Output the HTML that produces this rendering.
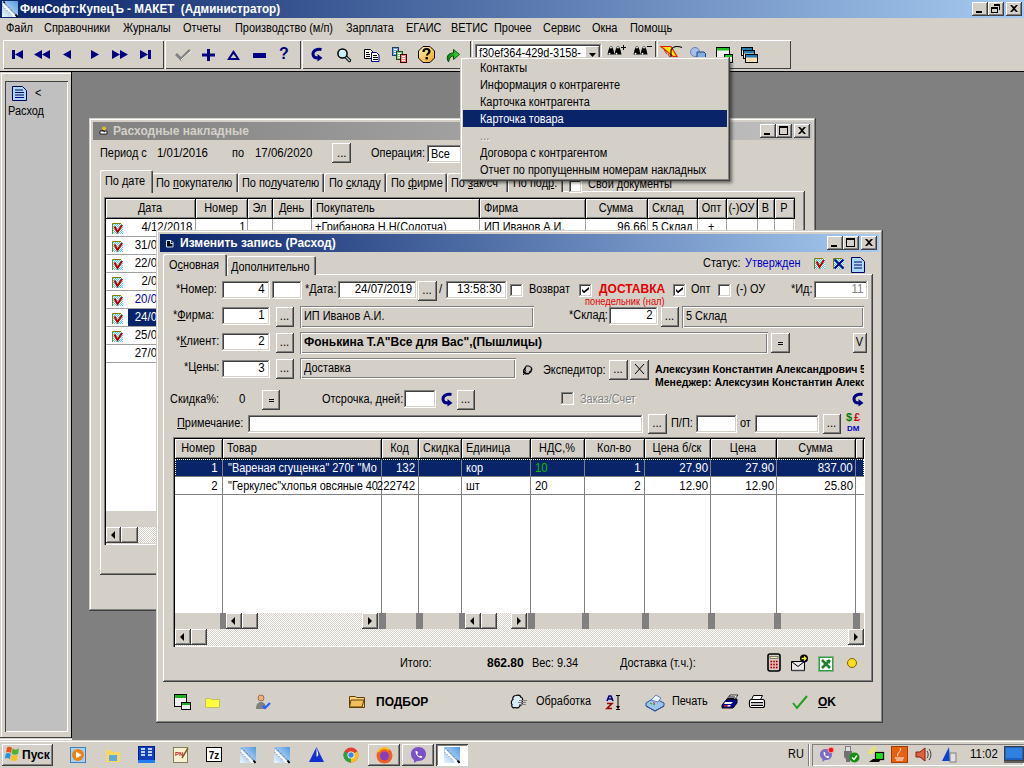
<!DOCTYPE html><html><head><meta charset="utf-8"><style>
*{margin:0;padding:0;box-sizing:border-box}
html,body{width:1024px;height:768px;overflow:hidden;background:#808080;font-family:"Liberation Sans",sans-serif;font-size:11px;color:#000}
.a{position:absolute}
.t{position:absolute;line-height:13px;white-space:nowrap;font-size:12px;transform:scaleX(.91);transform-origin:0 0}
.t.r{transform-origin:100% 0}
.t.c{transform-origin:50% 0}
.b{font-weight:bold}
.t.b{transform:none}
.t.n{transform:scaleX(.955)}
.face{background:#D4D0C8}
.raised{background:#D4D0C8;box-shadow:inset -1px -1px #404040,inset 1px 1px #fff,inset -2px -2px #808080,inset 2px 2px #D4D0C8}
.btn{background:#D4D0C8;box-shadow:inset -1px -1px #404040,inset 1px 1px #fff,inset -2px -2px #808080}
.sunken{background:#fff;box-shadow:inset -1px -1px #fff,inset 1px 1px #808080,inset -2px -2px #D4D0C8,inset 2px 2px #404040}
.etched{background:#D4D0C8;box-shadow:inset 1px 1px #808080,inset 2px 2px #fff,inset -1px -1px #fff,inset -2px -2px #808080}
.win{background:#D4D0C8;box-shadow:inset -1px -1px #404040,inset 1px 1px #D4D0C8,inset -2px -2px #808080,inset 2px 2px #fff}
.pane{background:#D4D0C8;box-shadow:inset -1px -1px #404040,inset 1px 1px #fff,inset -2px -2px #808080}
.cap{background:#D4D0C8;box-shadow:inset -1px -1px #404040,inset 1px 1px #fff,inset -2px -2px #808080}
.hdr{background:#D4D0C8;box-shadow:inset -1px -1px #000,inset 1px 1px #fff,inset -2px -2px #808080}
.u{text-decoration:underline}
.sel{background:#0A246A;color:#fff}
.dots{background-color:#fff;background-image:linear-gradient(45deg,#D4D0C8 25%,transparent 25%,transparent 75%,#D4D0C8 75%),linear-gradient(45deg,#D4D0C8 25%,transparent 25%,transparent 75%,#D4D0C8 75%);background-size:2px 2px;background-position:0 0,1px 1px}
svg{position:absolute;overflow:visible}
</style></head><body><svg width="0" height="0" style="position:absolute"><defs><pattern id="ck" width="2" height="2" patternUnits="userSpaceOnUse"><rect width="2" height="2" fill="#fff"/><rect width="1" height="1" fill="#40d8e8"/><rect x="1" y="1" width="1" height="1" fill="#40d8e8"/></pattern></defs></svg>
<div class="a" style="left:0;top:0;width:1024px;height:18px;background:linear-gradient(90deg,#0A246A,#A6CAF0)"></div>
<svg style="left:2px;top:1px" width="16" height="16" viewBox="0 0 16 16"><defs><linearGradient id="g1" x1="1" y1="0" x2="0" y2="1"><stop offset="0" stop-color="#5098e0"/><stop offset="1" stop-color="#f0f8ff"/></linearGradient></defs><rect x="0" y="0" width="16" height="16" fill="url(#g1)"/><path d="M1 2L15 16L11 16L1 6z" fill="#fff"/><path d="M2 1.5l13.5 13.5" stroke="#204060" stroke-width="0.9" stroke-dasharray="1 1.2"/><path d="M1 5.5l9 9" stroke="#204060" stroke-width="0.9" stroke-dasharray="1 1.5"/><path d="M13.5 13.5l2 2.5" stroke="#000" stroke-width="2"/><path d="M1.5 0.5l1.5 1.5" stroke="#000" stroke-width="1.5"/></svg>
<div class="t b" style="left:20px;top:3px;color:#fff;transform:scaleX(.972)">ФинСофт:КупецЪ - МАКЕТ&nbsp;&nbsp;(Администратор)</div>
<div class="a cap" style="left:972px;top:2px;width:16px;height:14px;"></div>
<svg style="left:976px;top:11px" width="6" height="2" viewBox="0 0 6 2"><rect width="6" height="2" fill="#000"/></svg>
<div class="a cap" style="left:988px;top:2px;width:16px;height:14px;"></div>
<svg style="left:991px;top:4px" width="9" height="9" viewBox="0 0 9 9"><path d="M2 0h7v6H8V2H3V0z M0 3h7v6H0z M1 5v3h5V5z" fill="#000" fill-rule="evenodd"/></svg>
<div class="a cap" style="left:1006px;top:2px;width:16px;height:14px;"></div>
<svg style="left:1010px;top:5px" width="8" height="7" viewBox="0 0 8 7"><path d="M0 0h2l2 2 2-2h2L5 3.5 8 7H6L4 5 2 7H0l3-3.5z" fill="#000"/></svg>
<div class="a face" style="left:0px;top:18px;width:1024px;height:54px;"></div>
<div class="t " style="left:6px;top:22px;">Файл</div>
<div class="t " style="left:44px;top:22px;">Справочники</div>
<div class="t " style="left:123px;top:22px;">Журналы</div>
<div class="t " style="left:183px;top:22px;">Отчеты</div>
<div class="t " style="left:235px;top:22px;">Производство (м/п)</div>
<div class="t " style="left:346px;top:22px;">Зарплата</div>
<div class="t " style="left:406px;top:22px;">ЕГАИС</div>
<div class="t " style="left:451px;top:22px;">ВЕТИС</div>
<div class="t " style="left:494px;top:22px;">Прочее</div>
<div class="t " style="left:543px;top:22px;">Сервис</div>
<div class="t " style="left:592px;top:22px;">Окна</div>
<div class="t " style="left:630px;top:22px;">Помощь</div>
<div class="a" style="left:3px;top:40px;width:161px;height:29px;box-shadow:inset 1px 1px #fff,inset -1px -1px #404040"></div>
<div class="a" style="left:165px;top:40px;width:136px;height:29px;box-shadow:inset 1px 1px #fff,inset -1px -1px #404040"></div>
<div class="a" style="left:302px;top:40px;width:169px;height:29px;box-shadow:inset 1px 1px #fff,inset -1px -1px #404040"></div>
<div class="a" style="left:472px;top:40px;width:184px;height:29px;box-shadow:inset 1px 1px #fff,inset -1px -1px #404040"></div>
<div class="a" style="left:657px;top:40px;width:134px;height:29px;box-shadow:inset 1px 1px #fff,inset -1px -1px #404040"></div>
<div class="a" style="left:0;top:71px;width:1024px;height:1px;background:#000"></div>
<svg style="left:12px;top:50px" width="11" height="9" viewBox="0 0 11 9"><rect x="0" y="0" width="3" height="9" fill="#000080"/><path d="M3 4.5L11 0v9z" fill="#000080"/></svg>
<svg style="left:34px;top:50px" width="16" height="9" viewBox="0 0 16 9"><path d="M0 4.5L8 0v9z M8 4.5L16 0v9z" fill="#000080"/></svg>
<svg style="left:63px;top:50px" width="8" height="9" viewBox="0 0 8 9"><path d="M0 4.5L8 0v9z" fill="#000080"/></svg>
<svg style="left:91px;top:50px" width="8" height="9" viewBox="0 0 8 9"><path d="M8 4.5L0 0v9z" fill="#000080"/></svg>
<svg style="left:112px;top:50px" width="16" height="9" viewBox="0 0 16 9"><path d="M8 4.5L0 0v9z M16 4.5L8 0v9z" fill="#000080"/></svg>
<svg style="left:140px;top:50px" width="11" height="9" viewBox="0 0 11 9"><rect x="8" y="0" width="3" height="9" fill="#000080"/><path d="M8 4.5L0 0v9z" fill="#000080"/></svg>
<svg style="left:175px;top:49px" width="16" height="12" viewBox="0 0 16 12"><path d="M0 6l2-2 4 4 8-8 2 2-10 10z" fill="#808080"/><path d="M6 11l10-9" stroke="#fff" stroke-width="1"/></svg>
<svg style="left:202px;top:49px" width="13" height="12" viewBox="0 0 13 12"><path d="M5 0h3v4.5h5v3H8V12H5V7.5H0v-3h5z" fill="#000080"/></svg>
<svg style="left:227px;top:50px" width="13" height="10" viewBox="0 0 13 10"><path d="M6.5 0L13 10H0z M6.5 4L3.5 8h6z" fill="#000080" fill-rule="evenodd"/></svg>
<svg style="left:253px;top:53px" width="13" height="5" viewBox="0 0 13 5"><rect width="13" height="5" fill="#000080"/></svg>
<div class="t b" style="left:279px;top:45px;font-size:16px;line-height:18px;color:#000080">?</div>
<svg style="left:311px;top:48px" width="13" height="14" viewBox="0 0 13 14"><path d="M10.5 1.5C6 0.5 2 2.5 2 6C2 8.5 4 10 7 10" stroke="#000080" stroke-width="3" fill="none"/><path d="M6.5 6L11.5 10L6.5 13.5z" fill="#000080"/></svg>
<svg style="left:337px;top:48px" width="14" height="14" viewBox="0 0 14 14"><path d="M8.5 8.5l4 4" stroke="#000" stroke-width="3.2" stroke-linecap="round"/><path d="M8.5 8.5l4 4" stroke="#a8d8f0" stroke-width="1.4" stroke-linecap="round"/><circle cx="5.5" cy="5.5" r="4.6" fill="#c8f0f8" stroke="#000" stroke-width="1.5"/><path d="M3.5 4a2.5 2.5 0 0 1 2-1.5" stroke="#fff" fill="none"/></svg>
<svg style="left:364px;top:49px" width="16" height="13" viewBox="0 0 16 13"><path d="M0.5 0.5h6l2 2v7h-8z" fill="#fff" stroke="#000"/><path d="M2 3.5h3M2 5.5h4M2 7.5h4" stroke="#000"/><path d="M7.5 3.5h5l2.5 2.5v6.5h-7.5z" fill="#fff" stroke="#000080"/><path d="M9 6.5h4M9 8.5h5M9 10.5h5" stroke="#000"/></svg>
<svg style="left:392px;top:47px" width="16" height="16" viewBox="0 0 16 16"><rect x="0.5" y="0.5" width="6" height="8" fill="#6aa8e0" stroke="#204060"/><path d="M2 2.5h3M2 4.5h3M2 6.5h3" stroke="#fff"/><rect x="4.5" y="4.5" width="6" height="8" fill="#70d080" stroke="#205020"/><path d="M6 6.5h3M6 8.5h3M6 10.5h3" stroke="#fff"/><rect x="8.5" y="7.5" width="6" height="8" fill="#f08080" stroke="#400000"/><path d="M10 9.5h3M10 11.5h3M10 13.5h3" stroke="#fff"/></svg>
<svg style="left:418px;top:46px" width="17" height="17" viewBox="0 0 17 17"><defs><linearGradient id="hg" x1="0" y1="0" x2="1" y2="1"><stop offset="0" stop-color="#fff8b0"/><stop offset="1" stop-color="#f0a020"/></linearGradient></defs><path d="M5 0.5h7l4.5 4.5v7L12 16.5H5L0.5 12V5z" fill="url(#hg)" stroke="#000"/><path d="M5.5 6c0-2 1.3-3 3-3s3 1 3 2.5c0 2-2.5 2-2.5 4" stroke="#000" stroke-width="2.2" fill="none"/><rect x="7.5" y="11" width="2.4" height="2.4" fill="#000"/></svg>
<svg style="left:446px;top:48px" width="14" height="15" viewBox="0 0 14 15"><defs><linearGradient id="ag" x1="0" y1="0" x2="1" y2="0"><stop offset="0" stop-color="#108010"/><stop offset="1" stop-color="#40e040"/></linearGradient></defs><path d="M2.5 14C0 10 1 5 7.5 5V1.5L13.5 6.5L7.5 11.5V8C5 8 3.5 10 2.5 14z" fill="url(#ag)" stroke="#004000" stroke-width="0.9"/></svg>
<div class="a sunken" style="left:475px;top:44px;width:127px;height:21px;"></div>
<div class="t " style="left:479px;top:47px;">f30ef364-429d-3158-</div>
<div class="a btn" style="left:585px;top:46px;width:15px;height:17px;"></div>
<svg style="left:589px;top:53px" width="7" height="4" viewBox="0 0 7 4"><path d="M0 0h7L3.5 4z" fill="#000"/></svg>
<svg style="left:607px;top:45px" width="19" height="11" viewBox="0 0 19 11"><path d="M3 1.5h2l1.5 3.5 1 4.5H0.5l1-4.5z M10 1.5h2l1.5 3.5 1 4.5h-7l1-4.5z" fill="#000"/><circle cx="4" cy="2.6" r="0.9" fill="#fff"/><circle cx="11" cy="2.6" r="0.9" fill="#fff"/><circle cx="2.5" cy="8.6" r="0.9" fill="#fff"/><circle cx="9.5" cy="8.6" r="0.9" fill="#fff"/><path d="M14 2.5h5M16.5 0v5" stroke="#000" stroke-width="1"/></svg>
<svg style="left:633px;top:45px" width="19" height="11" viewBox="0 0 19 11"><path d="M3 1.5h2l1.5 3.5 1 4.5H0.5l1-4.5z M10 1.5h2l1.5 3.5 1 4.5h-7l1-4.5z" fill="#000"/><circle cx="4" cy="2.6" r="0.9" fill="#fff"/><circle cx="11" cy="2.6" r="0.9" fill="#fff"/><circle cx="2.5" cy="8.6" r="0.9" fill="#fff"/><circle cx="9.5" cy="8.6" r="0.9" fill="#fff"/><path d="M14 1.5h5" stroke="#000" stroke-width="1"/></svg>
<svg style="left:660px;top:45px" width="23" height="13" viewBox="0 0 23 13"><path d="M1 1.5h10l6 10h-4z" fill="#ffe800" stroke="#e02000" stroke-width="1.2"/><path d="M4 5l3 4M8 9l2 3" stroke="#e02000"/><path d="M11 12V5c1-2 3-3.5 6-3.5s5 1 5 1" stroke="#000" stroke-width="1.1" fill="none"/></svg>
<svg style="left:690px;top:47px" width="16" height="10" viewBox="0 0 16 10"><circle cx="5" cy="5" r="4.5" fill="#a8c0e8" stroke="#6080c0"/><path d="M7 5h7l1.5 1.5v4H7z" fill="#80b0e0" stroke="#204080"/></svg>
<svg style="left:716px;top:47px" width="17" height="16" viewBox="0 0 17 16"><rect x="0.5" y="0.5" width="13" height="13" fill="#f0f0f0" stroke="#000"/><rect x="1" y="1" width="12" height="2.5" fill="#20c020"/><rect x="8.5" y="7.5" width="8" height="8" fill="#f0f0f0" stroke="#000"/><rect x="9" y="8" width="7" height="2" fill="#20c020"/></svg>
<svg style="left:741px;top:47px" width="17" height="16" viewBox="0 0 17 16"><rect x="0.5" y="0.5" width="11" height="8" fill="#f8e8c8" stroke="#000"/><rect x="1" y="1" width="10" height="2.5" fill="#2878b0"/><rect x="2.5" y="3.5" width="11" height="8" fill="#f8e8c8" stroke="#000"/><rect x="3" y="4" width="10" height="2.5" fill="#2878b0"/><rect x="4.5" y="7.5" width="12" height="8" fill="#f8e0b0" stroke="#000"/><rect x="5" y="8" width="11" height="2.5" fill="#2878b0"/></svg>
<div class="a face" style="left:0px;top:72px;width:72px;height:666px;box-shadow:inset -1px 0 #000,inset 0 -1px #404040,inset 1px 1px #D4D0C8,inset 2px 2px #fff"></div>
<div class="a face" style="left:0px;top:738px;width:72px;height:2px;box-shadow:inset 0 -1px #fff"></div>
<div class="a" style="left:5px;top:81px;width:63px;height:651px;background:#C0C0C0;box-shadow:inset 1px 1px #404040,inset -1px -1px #fff"></div>
<svg style="left:12px;top:86px" width="15" height="15" viewBox="0 0 15 15"><path d="M0.5 0.5h10l4 4v10h-14z" fill="#a8d8f8" stroke="#000060"/><path d="M3 4h8M3 6.5h9M3 9h9M3 11.5h9" stroke="#000060" stroke-width="1.2"/></svg>
<div class="t " style="left:35px;top:87px;">&lt;</div>
<div class="t " style="left:8px;top:105px;">Расход</div>
<div class="a win" style="left:89px;top:118px;width:727px;height:493px;"></div>
<div class="a" style="left:93px;top:122px;width:719px;height:18px;background:linear-gradient(90deg,#808080,#C0C0C0)"></div>
<svg style="left:99px;top:126px" width="9" height="9" viewBox="0 0 9 9"><path d="M1 5h7v3H1z" fill="#fff" stroke="#000" stroke-width="0.8"/><circle cx="5" cy="2.5" r="2" fill="#e8c020"/><path d="M3 4l3 2" stroke="#000"/></svg>
<div class="t b" style="left:113px;top:125px;color:#D4D0C8">Расходные накладные</div>
<div class="a cap" style="left:760px;top:124px;width:16px;height:14px;"></div>
<svg style="left:764px;top:133px" width="6" height="2" viewBox="0 0 6 2"><rect width="6" height="2" fill="#000"/></svg>
<div class="a cap" style="left:776px;top:124px;width:16px;height:14px;"></div>
<svg style="left:779px;top:126px" width="9" height="9" viewBox="0 0 9 9"><path d="M0 0h9v9H0z M1 2v6h7V2z" fill="#000" fill-rule="evenodd"/></svg>
<div class="a cap" style="left:794px;top:124px;width:16px;height:14px;"></div>
<svg style="left:798px;top:127px" width="8" height="7" viewBox="0 0 8 7"><path d="M0 0h2l2 2 2-2h2L5 3.5 8 7H6L4 5 2 7H0l3-3.5z" fill="#000"/></svg>
<div class="t " style="left:100px;top:147px;">Период с</div>
<div class="t  n" style="left:157px;top:147px;">1/01/2016</div>
<div class="t " style="left:232px;top:147px;">по</div>
<div class="t  n" style="left:255px;top:147px;">17/06/2020</div>
<div class="a btn" style="left:332px;top:143px;width:19px;height:20px;"></div>
<div class="t  n" style="left:337px;top:147px;">...</div>
<div class="t " style="left:371px;top:147px;">Операция:</div>
<div class="a sunken" style="left:427px;top:145px;width:60px;height:18px;"></div>
<div class="t " style="left:431px;top:148px;">Все</div>
<div class="a pane" style="left:100px;top:191px;width:705px;height:384px;"></div>
<div class="a" style="left:152px;top:173px;width:86px;height:19px;background:#D4D0C8;box-shadow:inset 1px 1px #fff,inset -1px 0 #404040,inset -2px 0 #808080;border-radius:2px 2px 0 0"></div>
<div class="a" style="left:238px;top:173px;width:86px;height:19px;background:#D4D0C8;box-shadow:inset 1px 1px #fff,inset -1px 0 #404040,inset -2px 0 #808080;border-radius:2px 2px 0 0"></div>
<div class="a" style="left:324px;top:173px;width:62px;height:19px;background:#D4D0C8;box-shadow:inset 1px 1px #fff,inset -1px 0 #404040,inset -2px 0 #808080;border-radius:2px 2px 0 0"></div>
<div class="a" style="left:386px;top:173px;width:61px;height:19px;background:#D4D0C8;box-shadow:inset 1px 1px #fff,inset -1px 0 #404040,inset -2px 0 #808080;border-radius:2px 2px 0 0"></div>
<div class="a" style="left:447px;top:173px;width:61px;height:19px;background:#D4D0C8;box-shadow:inset 1px 1px #fff,inset -1px 0 #404040,inset -2px 0 #808080;border-radius:2px 2px 0 0"></div>
<div class="a" style="left:508px;top:173px;width:55px;height:19px;background:#D4D0C8;box-shadow:inset 1px 1px #fff,inset -1px 0 #404040,inset -2px 0 #808080;border-radius:2px 2px 0 0"></div>
<div class="a" style="left:100px;top:170px;width:53px;height:23px;background:#D4D0C8;box-shadow:inset 1px 1px #fff,inset -1px 0 #404040,inset -2px 0 #808080;border-radius:2px 2px 0 0"></div>
<div class="t " style="left:105px;top:175px;">По дате</div>
<div class="t " style="left:156px;top:177px;">По <span class="u">п</span>окупателю</div>
<div class="t " style="left:242px;top:177px;">По по<span class="u">л</span>учателю</div>
<div class="t " style="left:329px;top:177px;">По <span class="u">с</span>кладу</div>
<div class="t " style="left:391px;top:177px;">По <span class="u">ф</span>ирме</div>
<div class="t " style="left:451px;top:177px;">По <span class="u">з</span>ак/сч</div>
<div class="t " style="left:513px;top:177px;">По под<span class="u">р</span>.</div>
<div class="a sunken" style="left:569px;top:180px;width:13px;height:13px;"></div>
<div class="t " style="left:588px;top:178px;">Свои документы</div>
<div class="a" style="left:104px;top:197px;width:691px;height:348px;background:#fff;box-shadow:inset 1px 1px #808080,inset 2px 2px #000,inset -1px -1px #fff,inset -2px -2px #D4D0C8"></div>
<div class="a hdr" style="left:106px;top:199px;width:90px;height:20px"></div>
<div class="t c " style="left:106px;width:88px;text-align:center;top:202px;">Дата</div>
<div class="a hdr" style="left:196px;top:199px;width:52px;height:20px"></div>
<div class="t c " style="left:196px;width:50px;text-align:center;top:202px;">Номер</div>
<div class="a hdr" style="left:248px;top:199px;width:25px;height:20px"></div>
<div class="t c " style="left:248px;width:23px;text-align:center;top:202px;">Эл</div>
<div class="a hdr" style="left:273px;top:199px;width:39px;height:20px"></div>
<div class="t c " style="left:273px;width:37px;text-align:center;top:202px;">День</div>
<div class="a hdr" style="left:312px;top:199px;width:168px;height:20px"></div>
<div class="t " style="left:316px;top:202px;">Покупатель</div>
<div class="a hdr" style="left:480px;top:199px;width:106px;height:20px"></div>
<div class="t " style="left:484px;top:202px;">Фирма</div>
<div class="a hdr" style="left:586px;top:199px;width:62px;height:20px"></div>
<div class="t c " style="left:586px;width:60px;text-align:center;top:202px;">Сумма</div>
<div class="a hdr" style="left:648px;top:199px;width:50px;height:20px"></div>
<div class="t " style="left:652px;top:202px;">Склад</div>
<div class="a hdr" style="left:698px;top:199px;width:29px;height:20px"></div>
<div class="t c " style="left:698px;width:27px;text-align:center;top:202px;">Опт</div>
<div class="a hdr" style="left:727px;top:199px;width:31px;height:20px"></div>
<div class="t c " style="left:727px;width:29px;text-align:center;top:202px;">(-)ОУ</div>
<div class="a hdr" style="left:758px;top:199px;width:17px;height:20px"></div>
<div class="t c " style="left:758px;width:15px;text-align:center;top:202px;">В</div>
<div class="a hdr" style="left:775px;top:199px;width:20px;height:20px"></div>
<div class="t c " style="left:775px;width:18px;text-align:center;top:202px;">Р</div>
<div class="a" style="left:106px;top:236px;width:688px;height:1px;background:#A0A0A0"></div>
<div class="a" style="left:106px;top:254px;width:688px;height:1px;background:#A0A0A0"></div>
<div class="a" style="left:106px;top:272px;width:688px;height:1px;background:#A0A0A0"></div>
<div class="a" style="left:106px;top:290px;width:688px;height:1px;background:#A0A0A0"></div>
<div class="a" style="left:106px;top:308px;width:688px;height:1px;background:#A0A0A0"></div>
<div class="a" style="left:106px;top:326px;width:688px;height:1px;background:#A0A0A0"></div>
<div class="a" style="left:106px;top:344px;width:688px;height:1px;background:#A0A0A0"></div>
<div class="a" style="left:106px;top:362px;width:688px;height:1px;background:#A0A0A0"></div>
<div class="a" style="left:195px;top:219px;width:1px;height:143px;background:#A0A0A0"></div>
<div class="a" style="left:247px;top:219px;width:1px;height:143px;background:#A0A0A0"></div>
<div class="a" style="left:272px;top:219px;width:1px;height:143px;background:#A0A0A0"></div>
<div class="a" style="left:311px;top:219px;width:1px;height:143px;background:#A0A0A0"></div>
<div class="a" style="left:479px;top:219px;width:1px;height:143px;background:#A0A0A0"></div>
<div class="a" style="left:585px;top:219px;width:1px;height:143px;background:#A0A0A0"></div>
<div class="a" style="left:647px;top:219px;width:1px;height:143px;background:#A0A0A0"></div>
<div class="a" style="left:697px;top:219px;width:1px;height:143px;background:#A0A0A0"></div>
<div class="a" style="left:726px;top:219px;width:1px;height:143px;background:#A0A0A0"></div>
<div class="a" style="left:757px;top:219px;width:1px;height:143px;background:#A0A0A0"></div>
<div class="a" style="left:774px;top:219px;width:1px;height:143px;background:#A0A0A0"></div>
<svg style="left:112px;top:223px" width="12" height="12" viewBox="0 0 12 12"><rect x="1" y="1" width="10" height="10" fill="url(#ck)"/><path d="M0.5 11V0.5H9" stroke="#808000" fill="none"/><path d="M2.5 3.5L5.5 9L10 2" stroke="#c00000" stroke-width="2" fill="none"/></svg>
<div class="t r  n" style="right:832px;top:221px;color:#000">4/12/2018</div>
<svg style="left:112px;top:241px" width="12" height="12" viewBox="0 0 12 12"><rect x="1" y="1" width="10" height="10" fill="url(#ck)"/><path d="M0.5 11V0.5H9" stroke="#808000" fill="none"/><path d="M2.5 3.5L5.5 9L10 2" stroke="#c00000" stroke-width="2" fill="none"/></svg>
<div class="t r  n" style="right:832px;top:239px;color:#000">31/07/2019</div>
<svg style="left:112px;top:259px" width="12" height="12" viewBox="0 0 12 12"><rect x="1" y="1" width="10" height="10" fill="url(#ck)"/><path d="M0.5 11V0.5H9" stroke="#808000" fill="none"/><path d="M2.5 3.5L5.5 9L10 2" stroke="#c00000" stroke-width="2" fill="none"/></svg>
<div class="t r  n" style="right:832px;top:257px;color:#000">22/07/2019</div>
<svg style="left:112px;top:277px" width="12" height="12" viewBox="0 0 12 12"><rect x="1" y="1" width="10" height="10" fill="url(#ck)"/><path d="M0.5 11V0.5H9" stroke="#808000" fill="none"/><path d="M2.5 3.5L5.5 9L10 2" stroke="#c00000" stroke-width="2" fill="none"/></svg>
<div class="t r  n" style="right:832px;top:275px;color:#000">2/07/2019</div>
<svg style="left:112px;top:295px" width="12" height="12" viewBox="0 0 12 12"><rect x="1" y="1" width="10" height="10" fill="url(#ck)"/><path d="M0.5 11V0.5H9" stroke="#808000" fill="none"/><path d="M2.5 3.5L5.5 9L10 2" stroke="#c00000" stroke-width="2" fill="none"/></svg>
<div class="t r  n" style="right:832px;top:293px;color:#0000A0">20/07/2019</div>
<div class="a sel" style="left:128px;top:309px;width:67px;height:17px"></div>
<svg style="left:112px;top:313px" width="12" height="12" viewBox="0 0 12 12"><rect x="1" y="1" width="10" height="10" fill="url(#ck)"/><path d="M0.5 11V0.5H9" stroke="#808000" fill="none"/><path d="M2.5 3.5L5.5 9L10 2" stroke="#c00000" stroke-width="2" fill="none"/></svg>
<div class="t r  n" style="right:832px;top:311px;color:#fff">24/07/2019</div>
<svg style="left:112px;top:331px" width="12" height="12" viewBox="0 0 12 12"><rect x="1" y="1" width="10" height="10" fill="url(#ck)"/><path d="M0.5 11V0.5H9" stroke="#808000" fill="none"/><path d="M2.5 3.5L5.5 9L10 2" stroke="#c00000" stroke-width="2" fill="none"/></svg>
<div class="t r  n" style="right:832px;top:329px;color:#000">25/07/2019</div>
<div class="t r  n" style="right:832px;top:347px;color:#000">27/07/2019</div>
<div class="t r  n" style="right:778px;top:221px;">1</div>
<div class="t " style="left:315px;top:221px;">+Грибанова Н.Н(Солотча)</div>
<div class="t " style="left:484px;top:221px;">ИП Иванов А.И.</div>
<div class="t r  n" style="right:378px;top:221px;">96.66</div>
<div class="t " style="left:652px;top:221px;">5 Склад</div>
<div class="t " style="left:708px;top:221px;">+</div>
<div class="a face" style="left:106px;top:511px;width:688px;height:16px;"></div>
<div class="a dots" style="left:106px;top:527px;width:688px;height:16px"></div>
<div class="a btn" style="left:106px;top:527px;width:15px;height:16px;"></div>
<svg style="left:111px;top:531px" width="4" height="8" viewBox="0 0 4 8"><path d="M4 0v8L0 4z" fill="#000"/></svg>
<div class="a btn" style="left:121px;top:527px;width:17px;height:16px;"></div>
<div class="a win" style="left:156px;top:230px;width:727px;height:493px;"></div>
<div class="a" style="left:160px;top:234px;width:719px;height:18px;background:linear-gradient(90deg,#0A246A,#A6CAF0)"></div>
<svg style="left:166px;top:240px" width="8" height="8" viewBox="0 0 8 8"><path d="M0.5 0.5h4.5l2 2v4.5h-6.5z" fill="#000" stroke="#c8ecff"/><path d="M4.5 1v2.5H7" stroke="#c8ecff" fill="none"/></svg>
<div class="t b" style="left:180px;top:237px;color:#fff">Изменить запись (Расход)</div>
<div class="a cap" style="left:827px;top:236px;width:16px;height:14px;"></div>
<svg style="left:831px;top:245px" width="6" height="2" viewBox="0 0 6 2"><rect width="6" height="2" fill="#000"/></svg>
<div class="a cap" style="left:843px;top:236px;width:16px;height:14px;"></div>
<svg style="left:846px;top:238px" width="9" height="9" viewBox="0 0 9 9"><path d="M0 0h9v9H0z M1 2v6h7V2z" fill="#000" fill-rule="evenodd"/></svg>
<div class="a cap" style="left:861px;top:236px;width:16px;height:14px;"></div>
<svg style="left:865px;top:239px" width="8" height="7" viewBox="0 0 8 7"><path d="M0 0h2l2 2 2-2h2L5 3.5 8 7H6L4 5 2 7H0l3-3.5z" fill="#000"/></svg>
<div class="a pane" style="left:163px;top:274px;width:710px;height:408px;"></div>
<div class="a" style="left:227px;top:256px;width:89px;height:19px;background:#D4D0C8;box-shadow:inset 1px 1px #fff,inset -1px 0 #404040,inset -2px 0 #808080;border-radius:2px 2px 0 0"></div>
<div class="a" style="left:163px;top:254px;width:64px;height:22px;background:#D4D0C8;box-shadow:inset 1px 1px #fff,inset -1px 0 #404040,inset -2px 0 #808080;border-radius:2px 2px 0 0"></div>
<div class="t " style="left:169px;top:259px;">О<span class="u">с</span>новная</div>
<div class="t " style="left:231px;top:261px;"><span class="u">Д</span>ополнительно</div>
<div class="t " style="left:703px;top:257px;">Статус:</div>
<div class="t " style="left:745px;top:257px;color:#0000C0">Утвержден</div>
<svg style="left:814px;top:258px" width="12" height="11" viewBox="0 0 12 11"><rect x="1" y="1" width="10" height="10" fill="url(#ck)"/><path d="M0.5 11V0.5H9" stroke="#808000" fill="none"/><path d="M2.5 3.5L5.5 9L10 2" stroke="#c00000" stroke-width="2" fill="none"/></svg>
<svg style="left:833px;top:258px" width="12" height="12" viewBox="0 0 12 12"><rect x="1" y="1" width="10" height="10" fill="url(#ck)"/><path d="M0.5 11V0.5H9" stroke="#808000" fill="none"/><path d="M1.5 1.5L10.5 10.5M10.5 1.5L1.5 10.5" stroke="#000090" stroke-width="2"/></svg>
<svg style="left:851px;top:257px" width="14" height="16" viewBox="0 0 14 16"><path d="M0.5 0.5h9l4 4v11h-13z" fill="#a8d8f8" stroke="#000060"/><path d="M3 5h8M3 8h8M3 11h8" stroke="#000060" stroke-width="1.2"/></svg>
<div class="t " style="left:176px;top:283px;">*Номер:</div>
<div class="a sunken" style="left:222px;top:281px;width:48px;height:18px;background:#fff"></div>
<div class="t r  n" style="right:759px;top:283px;color:#000">4</div>
<div class="a sunken" style="left:272px;top:281px;width:30px;height:18px;background:#fff"></div>
<div class="t " style="left:305px;top:283px;">*<span class="u">Д</span>ата:</div>
<div class="a sunken" style="left:338px;top:281px;width:79px;height:18px;background:#fff"></div>
<div class="t r  n" style="right:612px;top:283px;color:#000">24/07/2019</div>
<div class="a btn" style="left:418px;top:281px;width:19px;height:20px"></div>
<div class="t c  n" style="left:418px;width:18px;text-align:center;top:284px;">...</div>
<div class="t  n" style="left:439px;top:283px;">/</div>
<div class="a sunken" style="left:446px;top:281px;width:61px;height:18px;background:#fff"></div>
<div class="t r  n" style="right:522px;top:283px;color:#000">13:58:30</div>
<div class="a sunken" style="left:510px;top:284px;width:13px;height:13px;background:#fff"></div>
<div class="t " style="left:529px;top:283px;">Возврат</div>
<div class="a sunken" style="left:579px;top:284px;width:13px;height:13px;background:#fff"></div>
<svg style="left:582px;top:287px" width="7" height="7" viewBox="0 0 7 7"><path d="M0 2l2 2 5-4v2.2L2 6.2 0 4.2z" fill="#000"/></svg>
<div class="t b" style="left:599px;top:283px;color:#E00000">ДОСТАВКА</div>
<div class="t " style="left:585px;top:295px;color:#E00000;font-size:10.2px">понедельник (нал)</div>
<div class="a sunken" style="left:673px;top:284px;width:13px;height:13px;background:#fff"></div>
<svg style="left:676px;top:287px" width="7" height="7" viewBox="0 0 7 7"><path d="M0 2l2 2 5-4v2.2L2 6.2 0 4.2z" fill="#000"/></svg>
<div class="t " style="left:691px;top:283px;">Опт</div>
<div class="a sunken" style="left:718px;top:284px;width:13px;height:13px;background:#fff"></div>
<div class="t " style="left:736px;top:283px;">(-) ОУ</div>
<div class="t " style="left:791px;top:283px;">*Ид:</div>
<div class="a sunken" style="left:814px;top:281px;width:54px;height:18px;background:#fff"></div>
<div class="t r  n" style="right:161px;top:283px;color:#808080">11</div>
<div class="t " style="left:173px;top:309px;">*<span class="u">Ф</span>ирма:</div>
<div class="a sunken" style="left:222px;top:307px;width:48px;height:18px;background:#fff"></div>
<div class="t r  n" style="right:759px;top:309px;color:#000">1</div>
<div class="a btn" style="left:276px;top:307px;width:18px;height:20px"></div>
<div class="t c  n" style="left:276px;width:17px;text-align:center;top:310px;">...</div>
<div class="a etched" style="left:300px;top:306px;width:234px;height:22px"></div>
<div class="t " style="left:304px;top:310px;">ИП Иванов А.И.</div>
<div class="t " style="left:569px;top:309px;">*Склад:</div>
<div class="a sunken" style="left:609px;top:307px;width:49px;height:18px;background:#fff"></div>
<div class="t r  n" style="right:371px;top:309px;color:#000">2</div>
<div class="a btn" style="left:661px;top:307px;width:18px;height:20px"></div>
<div class="t c  n" style="left:661px;width:17px;text-align:center;top:310px;">...</div>
<div class="a etched" style="left:682px;top:306px;width:182px;height:22px"></div>
<div class="t " style="left:686px;top:310px;">5 Склад</div>
<div class="t " style="left:176px;top:335px;">*<span class="u">К</span>лиент:</div>
<div class="a sunken" style="left:222px;top:333px;width:48px;height:18px;background:#fff"></div>
<div class="t r  n" style="right:759px;top:335px;color:#000">2</div>
<div class="a btn" style="left:276px;top:333px;width:18px;height:20px"></div>
<div class="t c  n" style="left:276px;width:17px;text-align:center;top:336px;">...</div>
<div class="a etched" style="left:300px;top:332px;width:468px;height:22px"></div>
<div class="t b" style="left:304px;top:336px;">Фонькина Т.А"Все для Вас",(Пышлицы)</div>
<div class="a btn" style="left:771px;top:333px;width:19px;height:20px"></div>
<svg style="left:778px;top:342px" width="5" height="3" viewBox="0 0 5 3"><path d="M0 0.5h5M0 2.5h5" stroke="#000"/></svg>
<div class="a btn" style="left:853px;top:333px;width:14px;height:20px"></div>
<div class="t c " style="left:853px;width:13px;text-align:center;top:336px;">V</div>
<div class="t " style="left:184px;top:361px;">*Цены:</div>
<div class="a sunken" style="left:222px;top:360px;width:48px;height:18px;background:#fff"></div>
<div class="t r  n" style="right:759px;top:362px;color:#000">3</div>
<div class="a btn" style="left:276px;top:359px;width:18px;height:20px"></div>
<div class="t c  n" style="left:276px;width:17px;text-align:center;top:362px;">...</div>
<div class="a etched" style="left:300px;top:358px;width:216px;height:21px"></div>
<div class="t " style="left:304px;top:362px;">Доставка</div>
<svg style="left:522px;top:364px" width="12" height="12" viewBox="0 0 12 12"><path d="M4 1.5h3l2.5 1.5 1 2-1 3-3 2.5H3l-2-1.5v-3z" fill="#000"/><path d="M4.5 2.5h2.5l2 1.5-.5 2.5-2 1.5H4.5l-1-2.5z" fill="#c8c8c8"/><path d="M2.5 6.5l1.5 2h3" stroke="#a0a0a0" fill="none"/><path d="M1 11l1.5-1.5" stroke="#000"/></svg>
<div class="t " style="left:543px;top:364px;">Экспедитор:</div>
<div class="a btn" style="left:609px;top:360px;width:19px;height:20px"></div>
<div class="t c  n" style="left:609px;width:18px;text-align:center;top:363px;">...</div>
<div class="a btn" style="left:630px;top:360px;width:19px;height:20px"></div>
<div class="t c " style="left:630px;width:18px;text-align:center;top:363px;"></div>
<svg style="left:635px;top:364px" width="9" height="10" viewBox="0 0 9 10"><path d="M0 0l9 10M9 0L0 10" stroke="#000" stroke-width="1"/></svg>
<div class="a" style="left:655px;top:363px;width:209px;height:30px;overflow:hidden"><div class="t b" style="left:0;top:0;font-size:10.5px">Алексузин Константин Александрович</div><div class="t b" style="left:205px;top:0;font-size:10.5px">5</div><div class="t b" style="left:0;top:13px;font-size:10.5px">Менеджер: Алексузин Константин Алексеевич</div></div>
<div class="t " style="left:170px;top:393px;">Скидка%:</div>
<div class="t  n" style="left:239px;top:393px;">0</div>
<div class="a btn" style="left:262px;top:390px;width:18px;height:20px"></div>
<svg style="left:269px;top:399px" width="5" height="3" viewBox="0 0 5 3"><path d="M0 0.5h5M0 2.5h5" stroke="#000"/></svg>
<div class="t " style="left:322px;top:393px;">Отсрочка, дней:</div>
<div class="a sunken" style="left:404px;top:390px;width:32px;height:18px;background:#fff"></div>
<svg style="left:441px;top:393px" width="13" height="14" viewBox="0 0 13 14"><path d="M10.5 1.5C6 0.5 2 2.5 2 6C2 8.5 4 10 7 10" stroke="#000080" stroke-width="3" fill="none"/><path d="M6.5 6L11.5 10L6.5 13.5z" fill="#000080"/></svg>
<div class="a btn" style="left:457px;top:390px;width:18px;height:20px"></div>
<div class="t c  n" style="left:457px;width:17px;text-align:center;top:393px;">...</div>
<div class="a sunken" style="left:561px;top:392px;width:13px;height:13px;background:#D4D0C8"></div>
<div class="t " style="left:580px;top:393px;color:#808080;text-shadow:1px 1px #fff">Заказ/Счет</div>
<svg style="left:852px;top:393px" width="13" height="14" viewBox="0 0 13 14"><path d="M10.5 1.5C6 0.5 2 2.5 2 6C2 8.5 4 10 7 10" stroke="#000080" stroke-width="3" fill="none"/><path d="M6.5 6L11.5 10L6.5 13.5z" fill="#000080"/></svg>
<div class="t " style="left:177px;top:417px;"><span class="u">П</span>римечание:</div>
<div class="a sunken" style="left:248px;top:415px;width:395px;height:18px;background:#fff"></div>
<div class="a btn" style="left:648px;top:414px;width:19px;height:20px"></div>
<div class="t c  n" style="left:648px;width:18px;text-align:center;top:417px;">...</div>
<div class="t " style="left:671px;top:417px;">П/П:</div>
<div class="a sunken" style="left:696px;top:415px;width:41px;height:18px;background:#fff"></div>
<div class="t " style="left:740px;top:417px;">от</div>
<div class="a sunken" style="left:755px;top:415px;width:64px;height:18px;background:#fff"></div>
<div class="a btn" style="left:823px;top:414px;width:18px;height:20px"></div>
<div class="t c  n" style="left:823px;width:17px;text-align:center;top:417px;">...</div>
<div class="t b" style="left:846px;top:411px;color:#008000;font-size:11px">$</div>
<div class="t b" style="left:854px;top:411px;color:#D00000;font-size:11px">£</div>
<div class="t b" style="left:847px;top:422px;color:#0000D0;font-size:8px">DM</div>
<div class="a" style="left:173px;top:437px;width:692px;height:210px;background:#fff;box-shadow:inset 1px 1px #808080,inset 2px 2px #000,inset -1px -1px #fff"></div>
<div class="a hdr" style="left:175px;top:439px;width:48px;height:20px"></div>
<div class="t c " style="left:175px;width:46px;text-align:center;top:442px;">Номер</div>
<div class="a hdr" style="left:223px;top:439px;width:159px;height:20px"></div>
<div class="t " style="left:227px;top:442px;">Товар</div>
<div class="a hdr" style="left:382px;top:439px;width:37px;height:20px"></div>
<div class="t c " style="left:382px;width:35px;text-align:center;top:442px;">Код</div>
<div class="a hdr" style="left:419px;top:439px;width:43px;height:20px"></div>
<div class="t " style="left:423px;top:442px;">Скидка</div>
<div class="a hdr" style="left:462px;top:439px;width:69px;height:20px"></div>
<div class="t " style="left:466px;top:442px;">Единица</div>
<div class="a hdr" style="left:531px;top:439px;width:54px;height:20px"></div>
<div class="t c " style="left:531px;width:52px;text-align:center;top:442px;">НДС,%</div>
<div class="a hdr" style="left:585px;top:439px;width:60px;height:20px"></div>
<div class="t c " style="left:585px;width:58px;text-align:center;top:442px;">Кол-во</div>
<div class="a hdr" style="left:645px;top:439px;width:66px;height:20px"></div>
<div class="t c " style="left:645px;width:64px;text-align:center;top:442px;">Цена б/ск</div>
<div class="a hdr" style="left:711px;top:439px;width:66px;height:20px"></div>
<div class="t c " style="left:711px;width:64px;text-align:center;top:442px;">Цена</div>
<div class="a hdr" style="left:777px;top:439px;width:79px;height:20px"></div>
<div class="t c " style="left:777px;width:77px;text-align:center;top:442px;">Сумма</div>
<div class="a hdr" style="left:856px;top:439px;width:8px;height:20px"></div>
<div class="a sel" style="left:175px;top:459px;width:689px;height:18px;outline:1px dotted #fff;outline-offset:-1px"></div>
<div class="a" style="left:175px;top:476px;width:689px;height:1px;background:#808080"></div>
<div class="a" style="left:175px;top:494px;width:689px;height:1px;background:#808080"></div>
<div class="a" style="left:222px;top:459px;width:1px;height:154px;background:#808080"></div>
<div class="a" style="left:381px;top:459px;width:1px;height:154px;background:#808080"></div>
<div class="a" style="left:418px;top:459px;width:1px;height:154px;background:#808080"></div>
<div class="a" style="left:461px;top:459px;width:1px;height:154px;background:#808080"></div>
<div class="a" style="left:530px;top:459px;width:1px;height:154px;background:#808080"></div>
<div class="a" style="left:584px;top:459px;width:1px;height:154px;background:#808080"></div>
<div class="a" style="left:644px;top:459px;width:1px;height:154px;background:#808080"></div>
<div class="a" style="left:710px;top:459px;width:1px;height:154px;background:#808080"></div>
<div class="a" style="left:776px;top:459px;width:1px;height:154px;background:#808080"></div>
<div class="a" style="left:855px;top:459px;width:1px;height:154px;background:#808080"></div>
<div class="t r  n" style="right:806px;top:462px;color:#fff">1</div>
<div class="t " style="left:228px;top:462px;color:#fff">"Вареная сгущенка" 270г "Мо</div>
<div class="t r  n" style="right:609px;top:462px;color:#fff">132</div>
<div class="t " style="left:466px;top:462px;color:#fff">кор</div>
<div class="t  n" style="left:535px;top:462px;color:#00C000">10</div>
<div class="t r  n" style="right:383px;top:462px;color:#fff">1</div>
<div class="t r  n" style="right:316px;top:462px;color:#fff">27.90</div>
<div class="t r  n" style="right:250px;top:462px;color:#fff">27.90</div>
<div class="t r  n" style="right:171px;top:462px;color:#fff">837.00</div>
<div class="t r  n" style="right:806px;top:480px;">2</div>
<div class="t " style="left:228px;top:480px;">"Геркулес"хлопья овсяные 40</div>
<div class="t r  n" style="right:609px;top:480px;">222742</div>
<div class="t " style="left:466px;top:480px;">шт</div>
<div class="t  n" style="left:535px;top:480px;">20</div>
<div class="t r  n" style="right:383px;top:480px;">2</div>
<div class="t r  n" style="right:316px;top:480px;">12.90</div>
<div class="t r  n" style="right:250px;top:480px;">12.90</div>
<div class="t r  n" style="right:171px;top:480px;">25.80</div>
<div class="a face" style="left:175px;top:613px;width:689px;height:16px;"></div>
<div class="a" style="left:220px;top:613px;width:7px;height:16px;background:#808080"></div>
<div class="a" style="left:379px;top:613px;width:7px;height:16px;background:#808080"></div>
<div class="a" style="left:416px;top:613px;width:7px;height:16px;background:#808080"></div>
<div class="a" style="left:459px;top:613px;width:7px;height:16px;background:#808080"></div>
<div class="a" style="left:528px;top:613px;width:7px;height:16px;background:#808080"></div>
<div class="a" style="left:582px;top:613px;width:7px;height:16px;background:#808080"></div>
<div class="a" style="left:642px;top:613px;width:7px;height:16px;background:#808080"></div>
<div class="a" style="left:708px;top:613px;width:7px;height:16px;background:#808080"></div>
<div class="a" style="left:774px;top:613px;width:7px;height:16px;background:#808080"></div>
<div class="a" style="left:853px;top:613px;width:7px;height:16px;background:#808080"></div>
<div class="a btn" style="left:226px;top:613px;width:16px;height:16px;"></div>
<svg style="left:231px;top:617px" width="4" height="8" viewBox="0 0 4 8"><path d="M4 0v8L0 4z" fill="#000"/></svg>
<div class="a btn" style="left:242px;top:613px;width:16px;height:16px;"></div>
<div class="a dots" style="left:258px;top:613px;width:104px;height:16px"></div>
<div class="a btn" style="left:362px;top:613px;width:16px;height:16px;"></div>
<svg style="left:368px;top:617px" width="4" height="8" viewBox="0 0 4 8"><path d="M0 0v8l4-4z" fill="#000"/></svg>
<div class="a btn" style="left:465px;top:613px;width:16px;height:16px;"></div>
<svg style="left:470px;top:617px" width="4" height="8" viewBox="0 0 4 8"><path d="M4 0v8L0 4z" fill="#000"/></svg>
<div class="a btn" style="left:481px;top:613px;width:16px;height:16px;"></div>
<div class="a dots" style="left:497px;top:613px;width:14px;height:16px"></div>
<div class="a btn" style="left:511px;top:613px;width:16px;height:16px;"></div>
<svg style="left:517px;top:617px" width="4" height="8" viewBox="0 0 4 8"><path d="M0 0v8l4-4z" fill="#000"/></svg>
<div class="a dots" style="left:175px;top:629px;width:689px;height:17px"></div>
<div class="a btn" style="left:175px;top:629px;width:16px;height:16px;"></div>
<svg style="left:180px;top:633px" width="4" height="8" viewBox="0 0 4 8"><path d="M4 0v8L0 4z" fill="#000"/></svg>
<div class="a btn" style="left:191px;top:629px;width:16px;height:16px;"></div>
<div class="a btn" style="left:848px;top:629px;width:16px;height:16px;"></div>
<svg style="left:854px;top:633px" width="4" height="8" viewBox="0 0 4 8"><path d="M0 0v8l4-4z" fill="#000"/></svg>
<div class="t " style="left:400px;top:657px;">Итого:</div>
<div class="t b" style="left:487px;top:657px;font-size:12px">862.80</div>
<div class="t " style="left:532px;top:657px;">Вес: 9.34</div>
<div class="t " style="left:620px;top:657px;">Доставка (т.ч.):</div>
<svg style="left:767px;top:653px" width="14" height="19" viewBox="0 0 14 19"><rect x="1" y="1" width="12" height="17" rx="2" fill="#d0d0d0" stroke="#000" stroke-width="1.6"/><rect x="3" y="3.5" width="8" height="2" fill="#f0f0a0" stroke="#404040" stroke-width="0.6"/><rect x="2.5" y="7" width="9" height="9" fill="#f0b0b0"/><path d="M3.5 8.5h1.5M6.3 8.5h1.5M9 8.5h1.5M3.5 11.5h1.5M6.3 11.5h1.5M9 11.5h1.5M3.5 14.5h1.5M6.3 14.5h1.5M9 14.5h1.5" stroke="#800000" stroke-width="1.6"/></svg>
<svg style="left:791px;top:654px" width="17" height="18" viewBox="0 0 17 18"><path d="M0.5 7.5h13v9h-13z" fill="#e8e8e8" stroke="#000"/><path d="M0.5 7.5l6.5 5 6.5-5" fill="none" stroke="#000"/><path d="M1 16.5h13" stroke="#404040" stroke-width="1.4"/><circle cx="13" cy="4.5" r="4" fill="#000"/><path d="M10.5 4.5h4M13 2.5l2 2-2 2" stroke="#f8f020" stroke-width="1.3" fill="none"/></svg>
<svg style="left:818px;top:656px" width="16" height="16" viewBox="0 0 16 16"><rect x="0.5" y="0.5" width="15" height="15" fill="#fff" stroke="#208030" stroke-dasharray="1 1"/><rect x="1.5" y="1.5" width="13" height="13" fill="none" stroke="#30a040"/><path d="M4 4l8 8M12 4l-8 8" stroke="#208030" stroke-width="2.6"/><path d="M8 4l4 0 0 4z" fill="#208030"/></svg>
<svg style="left:847px;top:658px" width="10" height="10" viewBox="0 0 10 10"><circle cx="5" cy="5" r="4.5" fill="#f8e020" stroke="#806000"/></svg>
<svg style="left:174px;top:694px" width="17" height="16" viewBox="0 0 17 16"><rect x="0.5" y="0.5" width="12" height="12" fill="#f0f0f0" stroke="#000"/><rect x="1" y="1" width="11" height="3" fill="#2a2"/><rect x="7.5" y="8.5" width="9" height="7" fill="#f0f0f0" stroke="#000"/><rect x="8" y="9" width="8" height="2" fill="#2a2"/></svg>
<svg style="left:205px;top:696px" width="15" height="12" viewBox="0 0 15 12"><path d="M0.5 2.5h5l1 1h8v8h-14z" fill="#ffff40" stroke="#c0c060"/></svg>
<svg style="left:255px;top:694px" width="15" height="16" viewBox="0 0 15 16"><circle cx="6" cy="4" r="3" fill="#f0b080" stroke="#604020" stroke-width="0.6"/><path d="M1 15c0-5 2-7 5-7s5 2 5 7z" fill="#808080"/><path d="M8 12l2 2 5-5" stroke="#2060ff" stroke-width="2" fill="none"/></svg>
<svg style="left:349px;top:695px" width="17" height="13" viewBox="0 0 17 13"><path d="M0.5 1.5h6l1 1h8v10h-15z" fill="#f8d080" stroke="#604000"/><path d="M2 5h13l-2 7H0.5z" fill="#f0c060" stroke="#604000"/></svg>
<div class="t b" style="left:376px;top:696px;">ПОДБОР</div>
<svg style="left:511px;top:694px" width="18" height="16" viewBox="0 0 18 16"><path d="M5 1.5c2-1 5 0 5 2 2 0 2 2 1 3 1 2 0 5-2 5 0 2-3 3-5 2-2 1-4-1-3-3-1-1-1-4 1-5-1-2 1-4 3-4z" fill="#d8ecf8" stroke="#000" stroke-width="1.2"/><path d="M8 6.5h8M7 8.5h8M8 10.5h7" stroke="#808080"/></svg>
<div class="t " style="left:536px;top:695px;">Обработка</div>
<svg style="left:606px;top:695px" width="15" height="15" viewBox="0 0 15 15"><path d="M1 6L3 1h2l2 5M2 4h4" stroke="#000080" stroke-width="1.6" fill="none"/><path d="M1 8.5h5l-5 5h5" stroke="#a00000" stroke-width="1.6" fill="none"/><path d="M10 0.5h4M12 0.5v13M10 14.5h4" stroke="#000"/><path d="M10 11l2 3 2-3z" fill="#000"/></svg>
<svg style="left:645px;top:694px" width="20" height="17" viewBox="0 0 20 17"><path d="M1 9l8-5 10 5v3l-9 5-9-5z" fill="#a0c4e8" stroke="#2050a0"/><path d="M1 12l9 5 9-5" fill="none" stroke="#2050a0"/><path d="M6 6l5-5 5 3-3 4z" fill="#e8f0f8" stroke="#4070b0" stroke-width="0.8"/><path d="M5 9l2 1M8 10l2 1" stroke="#20a040"/><path d="M8 8.5l2 1" stroke="#e02020"/></svg>
<div class="t " style="left:672px;top:695px;">Печать</div>
<svg style="left:721px;top:694px" width="17" height="15" viewBox="0 0 17 15"><path d="M1 11l5-6h10v4l-4 5H1z" fill="#000090" stroke="#000"/><path d="M6 5l3-4h8l-3 4z" fill="#fff" stroke="#000" stroke-width="0.8"/><path d="M8 3h6M7 4.5h6" stroke="#000"/><path d="M4 8h8l-2 2H3z" fill="#fff"/><rect x="3" y="11" width="3" height="1.5" fill="#e02020"/><rect x="6.5" y="11" width="3" height="1.5" fill="#fff"/></svg>
<svg style="left:749px;top:695px" width="17" height="14" viewBox="0 0 17 14"><path d="M4.5 0.5h9l-2 4h-9z" fill="#fff" stroke="#000"/><rect x="0.5" y="4.5" width="15" height="8" rx="2" fill="#fff" stroke="#000" stroke-width="1.2"/><path d="M2 7.5h12M2 10.5h12" stroke="#000"/><rect x="2" y="8" width="12" height="2" fill="#c0c0c0"/></svg>
<svg style="left:792px;top:694px" width="16" height="16" viewBox="0 0 16 16"><path d="M1 9l4 5L15 2" stroke="#20a020" stroke-width="2" fill="none"/></svg>
<div class="t b" style="left:818px;top:696px;"><span class="u">O</span>K</div>
<div class="a win" style="left:460px;top:57px;width:270px;height:124px;box-shadow:inset -1px -1px #404040,inset 1px 1px #D4D0C8,inset -2px -2px #808080,inset 2px 2px #fff,3px 3px 3px -1px rgba(0,0,0,.5)"></div>
<div class="a sel" style="left:463px;top:110px;width:264px;height:17px"></div>
<div class="t " style="left:480px;top:62px;">Контакты</div>
<div class="t " style="left:480px;top:79px;">Информация о контрагенте</div>
<div class="t " style="left:480px;top:96px;">Карточка контрагента</div>
<div class="t " style="left:480px;top:113px;color:#fff">Карточка товара</div>
<div class="t  n" style="left:480px;top:130px;color:#808080;text-shadow:1px 1px #fff">...</div>
<div class="t " style="left:480px;top:147px;">Договора с контрагентом</div>
<div class="t " style="left:480px;top:164px;">Отчет по пропущенным номерам накладных</div>
<div class="a face" style="left:0px;top:740px;width:1024px;height:28px;box-shadow:inset 0 1px #D4D0C8,inset 0 2px #fff"></div>
<div class="a btn" style="left:2px;top:744px;width:51px;height:22px;"></div>
<svg style="left:4px;top:746px" width="16" height="15" viewBox="0 0 16 15"><path d="M3 1.5c1.5-1 3.5-1 5 0.5L7 7c-1.5-1.2-3.3-1.2-5-.5z" fill="#f05020"/><path d="M8.5 2.5c2 1.5 4 1.5 6.5 0L14 8c-2.3 1-4.3 1-6.3-.3z" fill="#50b030"/><path d="M1.8 7.5c1.7-.8 3.5-.8 5 .5L5.8 13c-1.5-1.3-3.3-1.3-5-.5z" fill="#2890e8"/><path d="M7.5 8.5c2 1.3 4 1.3 6.3.3L12.8 14.2c-2.3 1-4.3 1-6.3-.3z" fill="#f8c020"/></svg>
<div class="t b" style="left:22px;top:749px;">Пуск</div>
<svg style="left:70px;top:747px" width="16" height="16" viewBox="0 0 16 16"><rect x="0.5" y="0.5" width="15" height="15" fill="#a8d0f0" stroke="#4080c0"/><circle cx="8" cy="8" r="6" fill="#f08010"/><path d="M6 4.5v7l5.5-3.5z" fill="#fff"/></svg>
<svg style="left:105px;top:747px" width="16" height="16" viewBox="0 0 16 16"><path d="M1 3h5l1 2h8v10H1z" fill="#f8d860"/><rect x="4" y="8" width="8" height="6" fill="#60a8e0"/></svg>
<svg style="left:138px;top:746px" width="17" height="17" viewBox="0 0 17 17"><rect x="0.5" y="0.5" width="16" height="16" fill="#1040c0" stroke="#002080"/><path d="M3 3h4M3 6h4M3 9h4M10 3h4M10 6h4M10 9h4" stroke="#fff" stroke-width="1.5"/><rect x="0" y="14" width="17" height="3" fill="#2080f0"/></svg>
<svg style="left:173px;top:746px" width="16" height="17" viewBox="0 0 16 17"><rect x="0.5" y="1.5" width="14" height="15" fill="#f8f0d0" stroke="#808060"/><text x="2" y="10" font-size="6" font-weight="bold" fill="#c02020" font-family="Liberation Sans">PN</text><path d="M9 12l6-10" stroke="#806020" stroke-width="1.5"/></svg>
<svg style="left:206px;top:747px" width="16" height="15" viewBox="0 0 16 15"><rect x="0.5" y="0.5" width="15" height="14" fill="#fff" stroke="#000"/><text x="8" y="12" font-size="10" font-weight="bold" text-anchor="middle" fill="#000" font-family="Liberation Sans">7z</text></svg>
<svg width="0" height="0" style="position:absolute"><defs><linearGradient id="ga" x1="0" y1="0" x2="1" y2="1"><stop offset="0" stop-color="#6aa0d8"/><stop offset="1" stop-color="#e8f2fc"/></linearGradient></defs></svg>
<svg style="left:240px;top:747px" width="16" height="16" viewBox="0 0 16 16"><rect x="0" y="0" width="16" height="16" fill="url(#g1)"/><path d="M1 2L15 16L11 16L1 6z" fill="#fff"/><path d="M2 1.5l13.5 13.5" stroke="#204060" stroke-width="0.9" stroke-dasharray="1 1.2"/><path d="M1 5.5l9 9" stroke="#204060" stroke-width="0.9" stroke-dasharray="1 1.5"/><path d="M13.5 13.5l2 2.5" stroke="#000" stroke-width="2"/></svg>
<svg style="left:274px;top:747px" width="16" height="16" viewBox="0 0 16 16"><rect x="0" y="0" width="16" height="16" fill="url(#g1)"/><path d="M1 2L15 16L11 16L1 6z" fill="#fff"/><path d="M2 1.5l13.5 13.5" stroke="#204060" stroke-width="0.9" stroke-dasharray="1 1.2"/><path d="M1 5.5l9 9" stroke="#204060" stroke-width="0.9" stroke-dasharray="1 1.5"/><path d="M13.5 13.5l2 2.5" stroke="#000" stroke-width="2"/></svg>
<svg style="left:308px;top:746px" width="17" height="17" viewBox="0 0 17 17"><path d="M8.5 1L16 16H1z" fill="#1030d0"/><path d="M8.5 1l2 8-2 2z" fill="#fff"/></svg>
<svg style="left:343px;top:747px" width="16" height="16" viewBox="0 0 16 16"><circle cx="8" cy="8" r="7.5" fill="#e04030"/><path d="M8 8L14.5 4.25A7.5 7.5 0 0 1 8 15.5z" fill="#f8c020"/><path d="M8 8L8 15.5A7.5 7.5 0 0 1 1.5 4.25z" fill="#30a040"/><circle cx="8" cy="8" r="3.5" fill="#fff"/><circle cx="8" cy="8" r="2.7" fill="#4080f0"/></svg>
<div class="a btn" style="left:368px;top:744px;width:32px;height:22px;"></div>
<svg style="left:376px;top:747px" width="17" height="17" viewBox="0 0 17 17"><circle cx="8.5" cy="8.5" r="8" fill="#f06020"/><circle cx="8.5" cy="9" r="4.5" fill="#8040c0"/><path d="M2 5c2-4 8-5 11-2" stroke="#f8c020" stroke-width="2" fill="none"/></svg>
<div class="a btn" style="left:402px;top:744px;width:32px;height:22px;"></div>
<svg style="left:410px;top:746px" width="17" height="18" viewBox="0 0 17 18"><path d="M8.5 1C4 1 1 4 1 8c0 3 1.5 5 3 6v3l3-2h1.5c4.5 0 7.5-3 7.5-7s-3-7-7.5-7z" fill="#7b52c8"/><path d="M5.5 5c0 4 3 7 6 7l1-1.5-2-1-1 1c-1-.5-2-1.5-2.5-2.5l1-1-1-2z" fill="#fff"/></svg>
<div class="a" style="left:436px;top:744px;width:32px;height:22px;background:#fff;box-shadow:inset 1px 1px #404040,inset -1px -1px #fff,inset 2px 2px #808080"></div>
<svg style="left:444px;top:747px" width="16" height="16" viewBox="0 0 16 16"><rect x="0" y="0" width="16" height="16" fill="url(#g1)"/><path d="M1 2L15 16L11 16L1 6z" fill="#fff"/><path d="M2 1.5l13.5 13.5" stroke="#204060" stroke-width="0.9" stroke-dasharray="1 1.2"/><path d="M1 5.5l9 9" stroke="#204060" stroke-width="0.9" stroke-dasharray="1 1.5"/><path d="M13.5 13.5l2 2.5" stroke="#000" stroke-width="2"/></svg>
<div class="t " style="left:788px;top:748px;">RU</div>
<div class="a" style="left:808px;top:744px;width:2px;height:22px;box-shadow:inset 1px 0 #808080,inset -1px 0 #fff"></div>
<div class="a" style="left:812px;top:744px;width:212px;height:22px;box-shadow:inset 1px 1px #808080,inset -1px -1px #fff"></div>
<svg style="left:818px;top:746px" width="17" height="17" viewBox="0 0 17 17"><path d="M8 3C4.5 3 2 5 2 8.5c0 2 1 3.5 2.5 4.5v3l2.5-2h1c3.5 0 6-2 6-5.5S11.5 3 8 3z" fill="#7b6cc8"/><path d="M5.5 6.5c0 3 2.5 5.5 5 5.5l.8-1.3-1.6-.9-.8.8c-.9-.4-1.7-1.2-2.1-2.1l.8-.8-.9-1.6z" fill="#fff"/><circle cx="13" cy="4" r="2.8" fill="#ff1010" stroke="#ffb0b0" stroke-width="0.8"/></svg>
<svg style="left:843px;top:746px" width="17" height="17" viewBox="0 0 17 17"><rect x="2.5" y="0.5" width="5" height="5" fill="#e0e0e0" stroke="#808080"/><path d="M1 5h8v6l-2 2v3H3v-3l-2-2z" fill="#707070"/><circle cx="11.5" cy="11.5" r="5" fill="#109010"/><path d="M9 11.5l2 2 3-4" stroke="#fff" stroke-width="1.4" fill="none"/></svg>
<svg style="left:868px;top:746px" width="17" height="17" viewBox="0 0 17 17"><path d="M1 8a7 7 0 0 1 7-7M3 8a5 5 0 0 1 5-5M5 8a3 3 0 0 1 3-3" stroke="#f0f040" stroke-width="1.2" fill="none"/><rect x="7.5" y="6.5" width="8" height="7" fill="#20e020" stroke="#000" stroke-width="1.2"/><path d="M1 16l4-3h8l-2 3z" fill="#000"/></svg>
<svg style="left:891px;top:746px" width="17" height="17" viewBox="0 0 17 17"><rect x="0.5" y="0.5" width="16" height="16" fill="#e86010" stroke="#a04000"/><path d="M4 12h9M5 14h7" stroke="#fff"/><path d="M7 10c-2-3 4-4 2-8" stroke="#fff" fill="none"/></svg>
<svg style="left:915px;top:746px" width="17" height="17" viewBox="0 0 17 17"><path d="M1 6h4l5-4v13l-5-4H1z" fill="#e06040" stroke="#802000"/><path d="M12 5c1.5 2 1.5 5 0 7M14 3c2.5 3 2.5 8 0 11" stroke="#404040" fill="none"/></svg>
<svg style="left:940px;top:746px" width="17" height="17" viewBox="0 0 17 17"><path d="M9 1L2 15h8z" fill="#1040d0"/><rect x="10" y="7" width="6" height="9" fill="#e0e0e0" stroke="#808080"/></svg>
<div class="t  n" style="left:970px;top:748px;">11:02</div>
<svg style="left:1004px;top:746px" width="20" height="17" viewBox="0 0 20 17"><rect x="0.5" y="0.5" width="19" height="14" fill="#2060c0" stroke="#404040"/><rect x="2" y="2" width="16" height="10" fill="#3080e0"/><rect x="0" y="15" width="20" height="2" fill="#606060"/></svg></body></html>
